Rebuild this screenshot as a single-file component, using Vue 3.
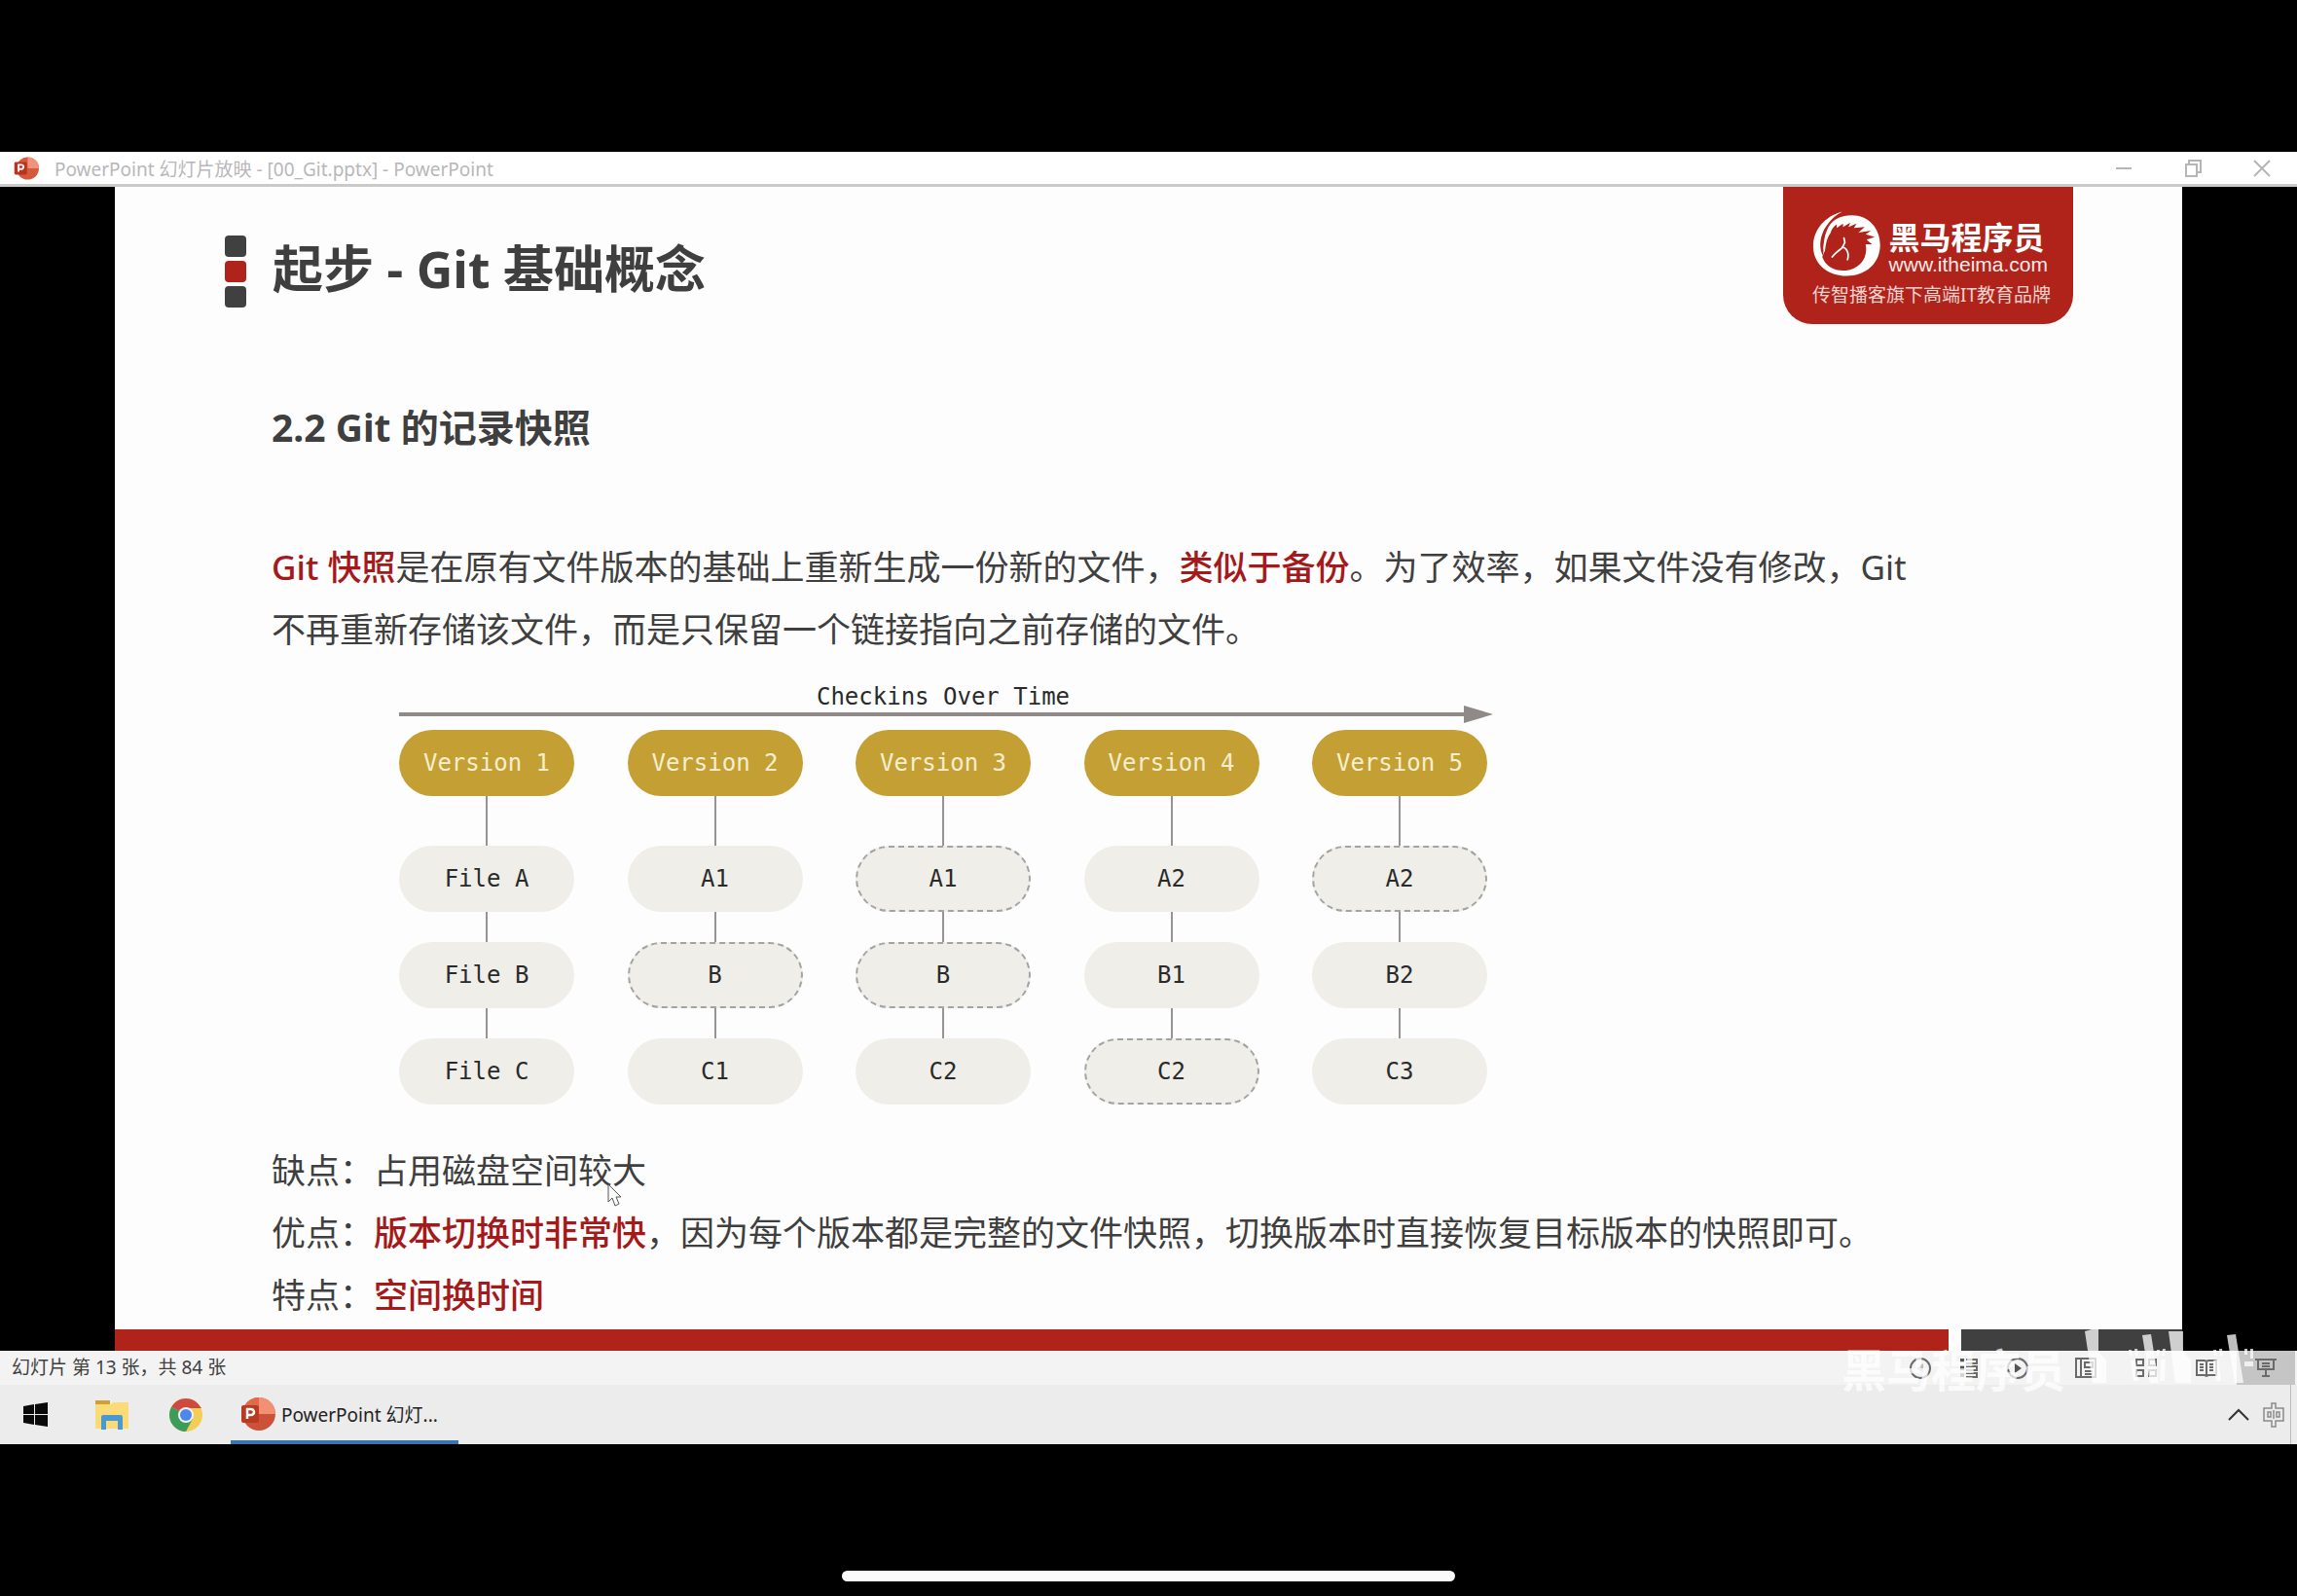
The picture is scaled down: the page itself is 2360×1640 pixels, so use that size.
<script setup>
const versions = [
  { name: 'Version 1', files: [{ label: 'File A' }, { label: 'File B' }, { label: 'File C' }] },
  { name: 'Version 2', files: [{ label: 'A1' }, { label: 'B', linked: true }, { label: 'C1' }] },
  { name: 'Version 3', files: [{ label: 'A1', linked: true }, { label: 'B', linked: true }, { label: 'C2' }] },
  { name: 'Version 4', files: [{ label: 'A2' }, { label: 'B1' }, { label: 'C2', linked: true }] },
  { name: 'Version 5', files: [{ label: 'A2', linked: true }, { label: 'B2' }, { label: 'C3' }] },
]
</script>

<template>
  <div class="screen">
    <div class="window">
      <header class="titlebar">
        <svg class="app-icon" viewBox="0 0 36 36" aria-hidden="true">
          <circle cx="20" cy="18" r="16" fill="#d35a3c" />
          <path d="M20 2a16 16 0 0 1 16 16H20z" fill="#f0937a" />
          <rect x="1" y="9" width="18" height="18" rx="2" fill="#b8341d" />
          <path d="M7 23V13h4a3 3 0 0 1 0 6H7" fill="none" stroke="#fff" stroke-width="2.5" />
        </svg>
        <span class="window-title">PowerPoint 幻灯片放映 - [00_Git.pptx] - PowerPoint</span>
        <div class="window-controls">
          <button type="button" aria-label="最小化">
            <svg viewBox="0 0 18 18"><path d="M1 9h16" /></svg>
          </button>
          <button type="button" aria-label="还原">
            <svg viewBox="0 0 18 18"><path d="M2 5h11v12H2zM5 5V1h12v12h-4" /></svg>
          </button>
          <button type="button" aria-label="关闭">
            <svg viewBox="0 0 18 18"><path d="M1 1l16 16M17 1L1 17" /></svg>
          </button>
        </div>
      </header>

      <main class="stage">
        <article class="slide">
          <div class="slide-head">
            <div class="heading">
              <div class="marks"><i></i><i class="red"></i><i></i></div>
              <h1>起步 - Git 基础概念</h1>
            </div>
            <div class="brand">
              <div class="brand-main">
                <svg class="horse" viewBox="0 0 76 72" aria-hidden="true">
                  <path fill="#fff" d="M33 0C14 5 1 20 1 38c0 20 16 33 37 33 22 0 37-15 37-34C75 18 62 4 44 4 30 4 20 10 16 21c-3 7-3 13-4 19 1 4-1 6 1 10-6-6-6-24 4-36C21 8 26 4 33 0z" />
                  <path fill="#b0231a" d="M14 43c1-7 2-14 6-19 1-4 3-7 7-10l0 4 7-5 0 4 8-5-2 5 9-4-3 5 12-1-7 6 14-2-6 4 10 3-9 3 6 5-7 0c3 16-7 27-22 29-12 1-22-4-26-15z" />
                  <path fill="none" stroke="#fff" stroke-width="1.8" stroke-linecap="round" d="M35 29l1 5-3 6c-4 3-8 6-11 10M33 39c5 1 8 6 6 14" />
                </svg>
                <div class="brand-text">
                  <strong>黑马程序员</strong>
                  <a href="#">www.itheima.com</a>
                </div>
              </div>
              <span class="tagline">传智播客旗下高端IT教育品牌</span>
            </div>
          </div>

          <div class="content">
            <h2>2.2 Git 的记录快照</h2>
            <p class="intro">
              <em>Git 快照</em>是在原有文件版本的基础上重新生成一份新的文件，<em>类似于备份</em>。为了效率，如果文件没有修改，Git<br />不再重新存储该文件，而是只保留一个链接指向之前存储的文件。
            </p>

            <figure class="diagram">
              <figcaption>Checkins Over Time</figcaption>
              <div class="timeline"></div>
              <div class="versions">
                <div v-for="version in versions" :key="version.name" class="version">
                  <div class="pill head">{{ version.name }}</div>
                  <template v-for="(file, i) in version.files" :key="i">
                    <div class="link" :class="{ long: i === 0 }"></div>
                    <div class="pill" :class="{ linked: file.linked }">{{ file.label }}</div>
                  </template>
                </div>
              </div>
            </figure>

            <div class="notes">
              <p>
                缺点：占用磁盘空间较<span class="pointed">大<svg class="cursor" viewBox="0 0 15 24" aria-hidden="true"><path d="M1 1v18l4-4 3 8 4-2-3-7h5z" fill="#fff" stroke="#555" /></svg></span>
              </p>
              <p>优点：<em>版本切换时非常快</em>，因为每个版本都是完整的文件快照，切换版本时直接恢复目标版本的快照即可。</p>
              <p>特点：<em>空间换时间</em></p>
            </div>
          </div>
          <div class="slide-foot"><i class="foot-red"></i><i class="foot-dark"></i></div>
        </article>
      </main>

      <div class="statusbar">
        <span class="page-count">幻灯片 第 13 张，共 84 张</span>
        <div class="views">
          <button type="button" aria-label="上一张">
            <svg viewBox="0 0 22 22"><circle cx="11" cy="11" r="10" /><path class="pale" d="M14 6v10l-7-5z" /></svg>
          </button>
          <button type="button" aria-label="菜单">
            <svg viewBox="0 0 22 22"><path d="M8 2h11v4H8M8 9h11v4H8M8 16h11v4H8" /><path class="solid" d="M2 1h4v4H2zM2 8h4v5H2zM2 16h4v4H2z" /></svg>
          </button>
          <button type="button" aria-label="下一张">
            <svg viewBox="0 0 22 22"><circle cx="11" cy="11" r="10" /><path class="solid" d="M8 6v10l7-5z" /></svg>
          </button>
          <button type="button" class="wide" aria-label="普通视图">
            <svg viewBox="0 0 22 22"><path d="M1 1h20v19H1zM6 1v19M10 5h8v5h-8zM10 14h8M10 17h8" /></svg>
          </button>
          <button type="button" class="wide" aria-label="幻灯片浏览">
            <svg viewBox="0 0 22 22"><path d="M1 2h7v6H1zM14 2h7v6h-7zM1 13h7v6H1zM14 13h7v6h-7z" /></svg>
          </button>
          <button type="button" class="wide" aria-label="阅读视图">
            <svg viewBox="0 0 22 22"><path d="M1 3h8l2 1 2-1h8v15h-8l-2 1-2-1H1zM11 4v15M4 7h4M4 10h4M4 13h4M14 7h4M14 10h4M14 13h4" /></svg>
          </button>
          <button type="button" class="active" aria-label="幻灯片放映">
            <svg viewBox="0 0 22 22"><path d="M0 2h22M3 2v10h16V2M7 6h8M7 9h8M11 12v7M7 19h8" /></svg>
          </button>
        </div>
        <div class="watermark">
          <span>黑马程序员</span>
          <svg viewBox="0 0 184 66" aria-hidden="true">
            <path d="M2 5l14-4v25l8 9v23H10zM61 9l9-1 8 50h-9zM88 5h15v20l8 10v23H95zM148 9l9-1 8 50h-9zM47 24h3l1 6h-3zM53 23h3l1 7h-3zM76 24h3l-1 6h-3zM82 23h3l-1 7h-3zM134 24h3l1 6h-3zM140 23h3l1 7h-3zM166 23h3v6h-3zM172 23h3v10h-3zM49 35l5-1 3 22h-5zM80 34h5l-1 22h-5zM134 35l5-1 3 22h-5zM166 36h9v5h-9z" fill="#fff" />
          </svg>
        </div>
      </div>

      <footer class="taskbar">
        <button type="button" class="task" aria-label="开始">
          <svg class="start" viewBox="0 0 25 25"><path d="M0 4l11-2v10H0zM12 2l13-2v12H12zM0 13h11v10L0 21zM12 13h13v12l-13-2z" fill="#0a0a0a" /></svg>
        </button>
        <button type="button" class="task" aria-label="文件资源管理器">
          <svg viewBox="0 0 36 36">
            <path d="M1 3h15v6H1z" fill="#cf9f38" /><path d="M1 7h16l2-2h16v27H1z" fill="#fbdb77" />
            <path d="M7 33V20a2 2 0 0 1 2-2h18a2 2 0 0 1 2 2v13h-5v-9H12v9z" fill="#4a98d0" />
          </svg>
        </button>
        <button type="button" class="task" aria-label="Chrome">
          <svg viewBox="0 0 36 36">
            <circle cx="18" cy="18" r="17" fill="#f4cd55" />
            <path d="M18 18L3.300 9.500A17 17 0 0 1 32.700 9.500L34 11H18z" fill="#cf4a3e" />
            <path d="M3.300 9.500A17 17 0 0 0 18 35l7-13-7-4z" fill="#3f9c58" />
            <circle cx="18" cy="18" r="8" fill="#f1f1f1" /><circle cx="18" cy="18" r="6" fill="#4f86ec" />
          </svg>
        </button>
        <button type="button" class="task running">
          <svg viewBox="0 0 36 36" aria-hidden="true">
            <circle cx="19" cy="18" r="17" fill="#cb5238" />
            <path d="M19 1a17 17 0 0 1 17 17H19z" fill="#f39073" />
            <path d="M19 1v17H2A17 17 0 0 1 19 1z" fill="#e26a4b" />
            <rect x="1" y="9" width="18" height="18" rx="2" fill="#b93a21" />
            <path d="M7 23V13h4a3 3 0 0 1 0 6H7" fill="none" stroke="#fff" stroke-width="2.500" />
          </svg>
          <span>PowerPoint 幻灯...</span>
        </button>
        <div class="tray">
          <button type="button" aria-label="显示隐藏的图标">
            <svg viewBox="0 0 22 26"><path d="M1 18l10-10 10 10" fill="none" stroke="#333" stroke-width="2" /></svg>
          </button>
          <button type="button" aria-label="输入法">
            <svg viewBox="0 0 22 26"><path d="M9 1h4v5h8v13h-8v6H9v-6H1V6h8zM5 10h3v5H5zM14 10h3v5h-3zM11 8v9" fill="none" stroke="#8a8a8a" stroke-width="1.500" /></svg>
          </button>
        </div>
      </footer>
    </div>
    <div class="home-indicator"></div>
  </div>
</template>

<style>
html,
body {
  margin: 0;
  background: #000;
}
</style>

<style scoped>
.screen {
  box-sizing: border-box;
  min-height: 100vh;
  padding: 156px 0 15px;
  display: flex;
  flex-direction: column;
  background: #000;
  color: #3f3f3f;
  font-family: 'Noto Sans', 'Noto Sans CJK SC', sans-serif;
  font-size: 19px;
}
button {
  padding: 0;
  border: 0;
  background: none;
  font: inherit;
  color: inherit;
}
svg {
  display: block;
}
.titlebar {
  display: flex;
  align-items: center;
  box-sizing: border-box;
  height: 36px;
  padding: 0 27px 0 14px;
  gap: 16px;
  background: #fff;
  border-bottom: 3px solid #cbcacb;
  color: #b9b7b9;
}
.app-icon {
  width: 26px;
  height: 26px;
}
.window-controls {
  display: flex;
  gap: 53px;
  margin-left: auto;
}
.window-controls svg {
  width: 18px;
  height: 18px;
  fill: none;
  stroke: #b5b5b5;
  stroke-width: 2;
}
.stage {
  padding: 0 5%;
}
.slide {
  background: #fefdfe;
}
.slide-head {
  display: flex;
  justify-content: space-between;
  align-items: flex-start;
  padding: 0 112px 0 113px;
}
.heading {
  display: flex;
  align-items: flex-start;
  gap: 27px;
  margin-top: 50px;
}
.marks {
  display: grid;
  gap: 4px;
}
.marks i {
  width: 22px;
  height: 22px;
  border-radius: 4px;
  background: #404040;
}
.marks .red {
  background: #b0231a;
}
h1,
h2,
p,
figure {
  margin: 0;
}
h1 {
  font-size: 52px;
  line-height: 68px;
}
.brand {
  box-sizing: border-box;
  width: 298px;
  height: 141px;
  padding: 23px 26px 0 30px;
  border-radius: 0 0 30px 30px;
  background: #b0231a;
  color: #fff;
}
.brand-main {
  display: flex;
  align-items: center;
  gap: 8px;
}
.horse {
  width: 76px;
  height: 72px;
}
.brand-text {
  display: flex;
  flex-direction: column;
  padding-top: 6px;
}
.brand-text strong {
  font-size: 32px;
  line-height: 36px;
}
.brand-text a {
  color: #fbeae8;
  font: 21px/20px 'Liberation Sans', sans-serif;
  text-decoration: none;
}
.tagline {
  display: block;
  margin-top: 4px;
  line-height: 24px;
  color: #f3d3d0;
  white-space: nowrap;
}
.content {
  padding: 76px 160px 3px 161px;
}
h2 {
  font-size: 39px;
  line-height: 60px;
}
p {
  font-size: 35px;
  line-height: 64px;
}
em {
  color: #a5191a;
  font-style: normal;
  font-weight: 500;
}
.intro {
  margin-top: 82px;
}
.diagram {
  width: 1118px;
  margin: 28px 0 0 131px;
  font: 24px/30px 'DejaVu Sans Mono', monospace;
  color: #2a2a2a;
}
figcaption {
  line-height: 18px;
  text-align: center;
}
.timeline {
  display: flex;
  align-items: center;
  height: 18px;
  margin: 0 -6px 7px 0;
}
.timeline::before {
  content: '';
  flex: 1;
  height: 4px;
  background: #8f8a88;
}
.timeline::after {
  content: '';
  border: 9px solid transparent;
  border-left: 30px solid #8f8a88;
  border-right: 0;
}
.versions {
  display: flex;
  justify-content: space-between;
}
.version {
  display: flex;
  flex-direction: column;
  align-items: center;
}
.pill {
  display: flex;
  align-items: center;
  justify-content: center;
  box-sizing: border-box;
  width: 180px;
  height: 68px;
  border: 2px solid transparent;
  border-radius: 34px;
  background: #efeee9;
}
.pill.head {
  border: 0;
  background: #c4a034;
  color: #f6efcf;
}
.pill.linked {
  border: 2px dashed #a3a3a3;
}
.link {
  width: 2px;
  height: 31px;
  background: #969391;
}
.link.long {
  height: 51px;
}
.notes {
  margin-top: 36px;
}
.pointed {
  position: relative;
}
.cursor {
  position: absolute;
  left: -5px;
  bottom: -14px;
  width: 15px;
  height: 24px;
}
.slide-foot {
  display: flex;
  gap: 13px;
  height: 22px;
}
.foot-red {
  flex: 1;
  background: #b0231a;
}
.foot-dark {
  width: 227px;
  background: #404040;
}
.statusbar {
  position: relative;
  display: flex;
  align-items: center;
  justify-content: space-between;
  height: 35px;
  padding: 0 2px 0 12px;
  background: #f3f3f3;
}
.page-count {
  line-height: 24px;
  padding-bottom: 2px;
}
.views {
  display: flex;
  align-items: center;
}
.views button {
  display: flex;
  justify-content: center;
  width: 50px;
}
.views .wide {
  width: 62px;
}
.views .wide:nth-child(4) {
  margin-left: 14px;
}
.views .active {
  align-items: center;
  width: 60px;
  height: 35px;
  background: #c5c5c5;
}
.views svg {
  width: 22px;
  height: 22px;
  fill: none;
  stroke: #6a6a6a;
  stroke-width: 2;
}
.views .solid {
  fill: #555;
  stroke: none;
}
.views .pale {
  fill: #bbb;
  stroke: none;
}
.watermark {
  position: absolute;
  right: 36px;
  bottom: -10px;
  display: flex;
  align-items: flex-end;
  gap: 18px;
  opacity: 0.75;
  color: #fff;
  font-size: 46px;
  line-height: 52px;
  font-weight: 700;
  pointer-events: none;
}
.watermark svg {
  width: 184px;
  height: 66px;
  margin-bottom: 4px;
}
.taskbar {
  display: flex;
  align-items: center;
  height: 61px;
  padding-right: 6px;
  background: #ececec;
  color: #222;
}
.task {
  display: flex;
  align-items: center;
  justify-content: center;
  width: 76px;
  height: 61px;
}
.task svg {
  width: 36px;
  height: 36px;
}
.task .start {
  width: 25px;
  height: 25px;
}
.task:first-child {
  box-sizing: border-box;
  width: 77px;
  padding-right: 4px;
}
.task.running {
  box-sizing: border-box;
  justify-content: flex-start;
  gap: 6px;
  width: 234px;
  padding: 2px 0 0 10px;
  margin-left: 8px;
  border-bottom: 4px solid #3a75ae;
}
.tray {
  display: flex;
  align-items: center;
  gap: 14px;
  height: 61px;
  margin-left: auto;
  padding-right: 6px;
  border-right: 1px solid #bbb;
}
.tray svg {
  width: 22px;
  height: 26px;
}
.home-indicator {
  width: 630px;
  height: 11px;
  margin: auto auto 0;
  border-radius: 6px;
  background: #fafafa;
}
</style>
